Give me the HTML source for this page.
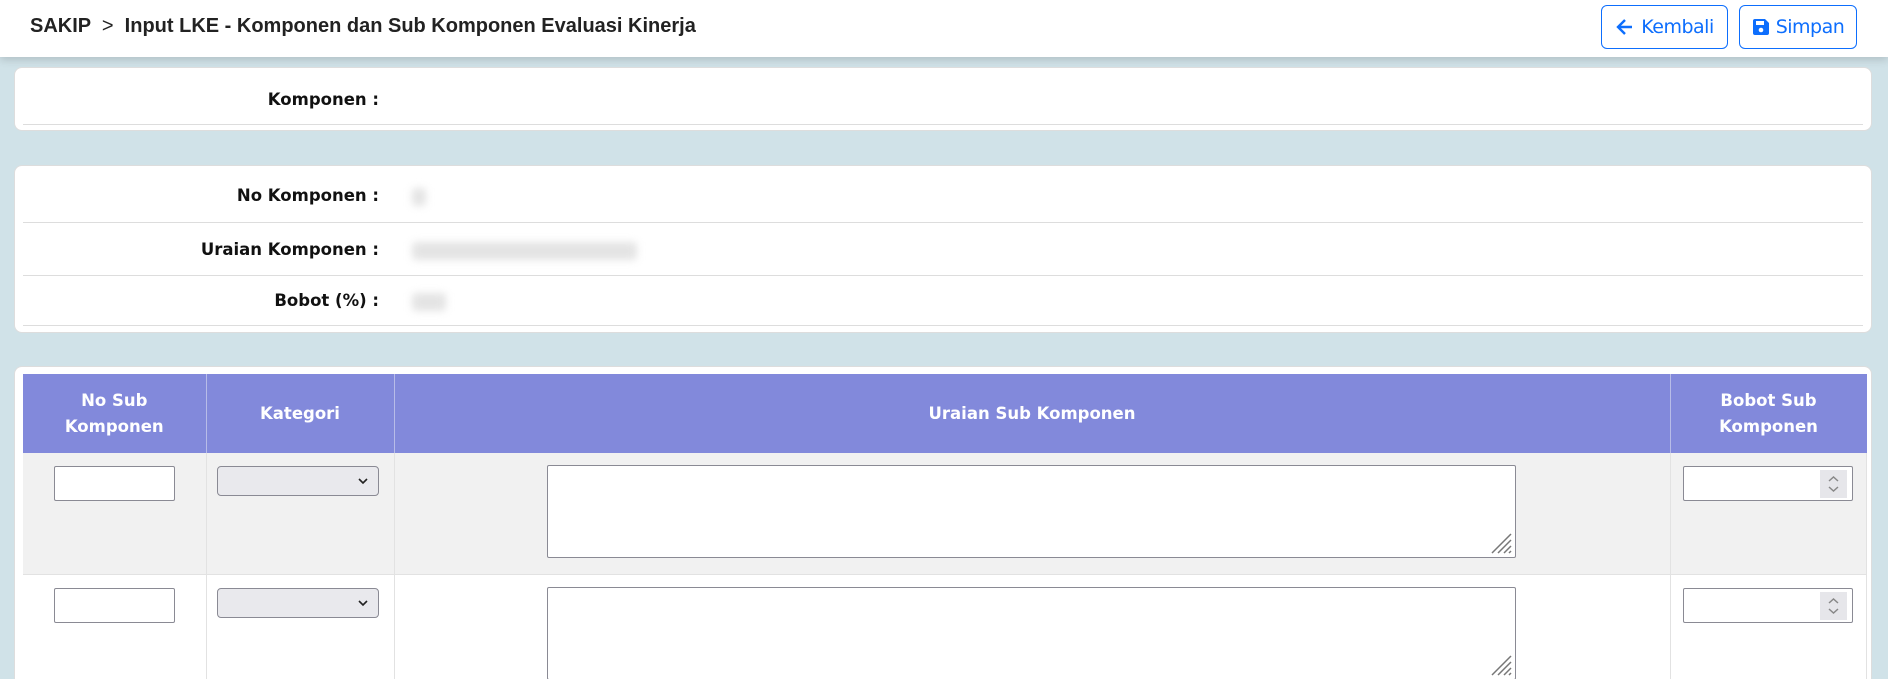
<!DOCTYPE html>
<html><head><meta charset="utf-8"><style>
*{box-sizing:border-box;margin:0;padding:0}
html,body{width:1888px;height:679px;overflow:hidden}
body{background:#d0e2e8;font-family:"DejaVu Sans",sans-serif;position:relative}
.hdr{position:absolute;left:0;top:0;width:1888px;height:57px;background:#fff;box-shadow:0 3px 8px rgba(0,0,0,.15)}
.title{position:absolute;left:30px;top:15px;font:bold 20px "Liberation Sans",sans-serif;color:#222}
.btn{position:absolute;top:5px;height:44px;border:1px solid #0d6efd;border-radius:6px;color:#0d6efd;font:19px "DejaVu Sans",sans-serif;display:flex;align-items:center;justify-content:center;gap:6px;letter-spacing:-0.5px}
.card{position:absolute;left:14px;width:1858px;background:#fff;border-radius:8px;border:1px solid #ddd;overflow:hidden}
.row{position:absolute;left:8px;right:8px;border-bottom:1px solid #ddd}
.lbl{position:absolute;right:1492px;font-weight:bold;font-size:16.5px;color:#111;white-space:nowrap}
.blur{position:absolute;left:397px;height:18px;background:#e4e4e4;filter:blur(4px);border-radius:4px}
table{position:absolute;left:8px;top:7px;width:1844px;border-collapse:collapse}
th{background:#8289db;color:#fff;font-size:16.5px;font-weight:bold;height:79px;border-right:1px solid #b8bce8;line-height:26px}
td{border-right:1px solid #e2e2e2;border-bottom:1px solid #e2e2e2;vertical-align:top;position:relative;height:121px}
tr.g td{background:#f1f1f1}
.in{position:absolute;background:#fff;border:1px solid #8a8a94;border-radius:2px}
.sel{position:absolute;background:#e9e9ed;border:1px solid #8a8a94;border-radius:4px}
</style></head><body>
<div class="hdr">
<div class="title">SAKIP &nbsp;<span style="font-weight:normal">&gt;</span>&nbsp; Input LKE - Komponen dan Sub Komponen Evaluasi Kinerja</div>
<div class="btn" style="left:1601px;width:127px"><svg width="20" height="20" viewBox="0 0 20 20"><path d="M17 10H4M10 3 3 10l7 7" stroke="#0d6efd" stroke-width="2.4" fill="none"/></svg>Kembali</div>
<div class="btn" style="left:1739px;width:118px"><svg width="18" height="18" viewBox="0 0 18 18"><path d="M1 3a2 2 0 0 1 2-2h10l4 4v10a2 2 0 0 1-2 2H3a2 2 0 0 1-2-2z" fill="#0d6efd"/><rect x="4" y="3" width="8" height="4" fill="#fff"/><circle cx="9" cy="12" r="2.3" fill="#fff"/></svg>Simpan</div>
</div>
<div class="card" style="top:67px;height:64px"><div class="row" style="top:0;height:57px"></div><div class="lbl" style="top:22px">Komponen :</div></div>
<div class="card" style="top:165px;height:168px">
<div class="row" style="top:0;height:57px"></div><div class="row" style="top:57px;height:53px"></div><div class="row" style="top:110px;height:50px"></div>
<div class="lbl" style="top:20px">No Komponen :</div><div class="blur" style="top:22px;width:14px"></div>
<div class="lbl" style="top:74px">Uraian Komponen :</div><div class="blur" style="top:76px;width:225px"></div>
<div class="lbl" style="top:125px">Bobot (%) :</div><div class="blur" style="top:127px;width:34px"></div>
</div>
<div class="card" style="top:366px;height:313px;border-bottom:none;border-radius:8px 8px 0 0">
<table>
<tr><th style="width:183px">No Sub<br>Komponen</th><th style="width:188px">Kategori</th><th style="width:1276px">Uraian Sub Komponen</th><th style="border-right:none">Bobot Sub<br>Komponen</th></tr>
<tr class="g"><td><div class="in" style="left:31px;top:13px;width:121px;height:35px"></div></td><td><div class="sel" style="left:10px;top:13px;width:162px;height:30px"><svg style="position:absolute;right:10px;top:11px" width="10" height="7" viewBox="0 0 10 7"><path d="M1 1l4 4 4-4" stroke="#222" stroke-width="1.6" fill="none"/></svg></div></td><td><div class="in" style="left:152px;top:12px;width:969px;height:93px"><svg style="position:absolute;right:3px;bottom:3px" width="22" height="22" viewBox="0 0 22 22"><path d="M2 21 21 2M8 21 21 8M14 21 21 14M19 21 21 19" stroke="#777" stroke-width="1.5"/></svg></div></td><td><div class="in" style="left:12px;top:13px;width:170px;height:35px"><div style="position:absolute;right:5px;top:3px;width:27px;height:28px;background:#e6e6ea"><svg style="position:absolute;left:7px;top:5px" width="13" height="18" viewBox="0 0 13 18"><path d="M2 6l4.5-4 4.5 4M2 12l4.5 4 4.5-4" stroke="#888" stroke-width="1.5" fill="none"/></svg></div></div></td></tr>
<tr><td><div class="in" style="left:31px;top:13px;width:121px;height:35px"></div></td><td><div class="sel" style="left:10px;top:13px;width:162px;height:30px"><svg style="position:absolute;right:10px;top:11px" width="10" height="7" viewBox="0 0 10 7"><path d="M1 1l4 4 4-4" stroke="#222" stroke-width="1.6" fill="none"/></svg></div></td><td><div class="in" style="left:152px;top:12px;width:969px;height:93px"><svg style="position:absolute;right:3px;bottom:3px" width="22" height="22" viewBox="0 0 22 22"><path d="M2 21 21 2M8 21 21 8M14 21 21 14M19 21 21 19" stroke="#777" stroke-width="1.5"/></svg></div></td><td><div class="in" style="left:12px;top:13px;width:170px;height:35px"><div style="position:absolute;right:5px;top:3px;width:27px;height:28px;background:#e6e6ea"><svg style="position:absolute;left:7px;top:5px" width="13" height="18" viewBox="0 0 13 18"><path d="M2 6l4.5-4 4.5 4M2 12l4.5 4 4.5-4" stroke="#888" stroke-width="1.5" fill="none"/></svg></div></div></td></tr>
</table>
</div>
</body></html>
